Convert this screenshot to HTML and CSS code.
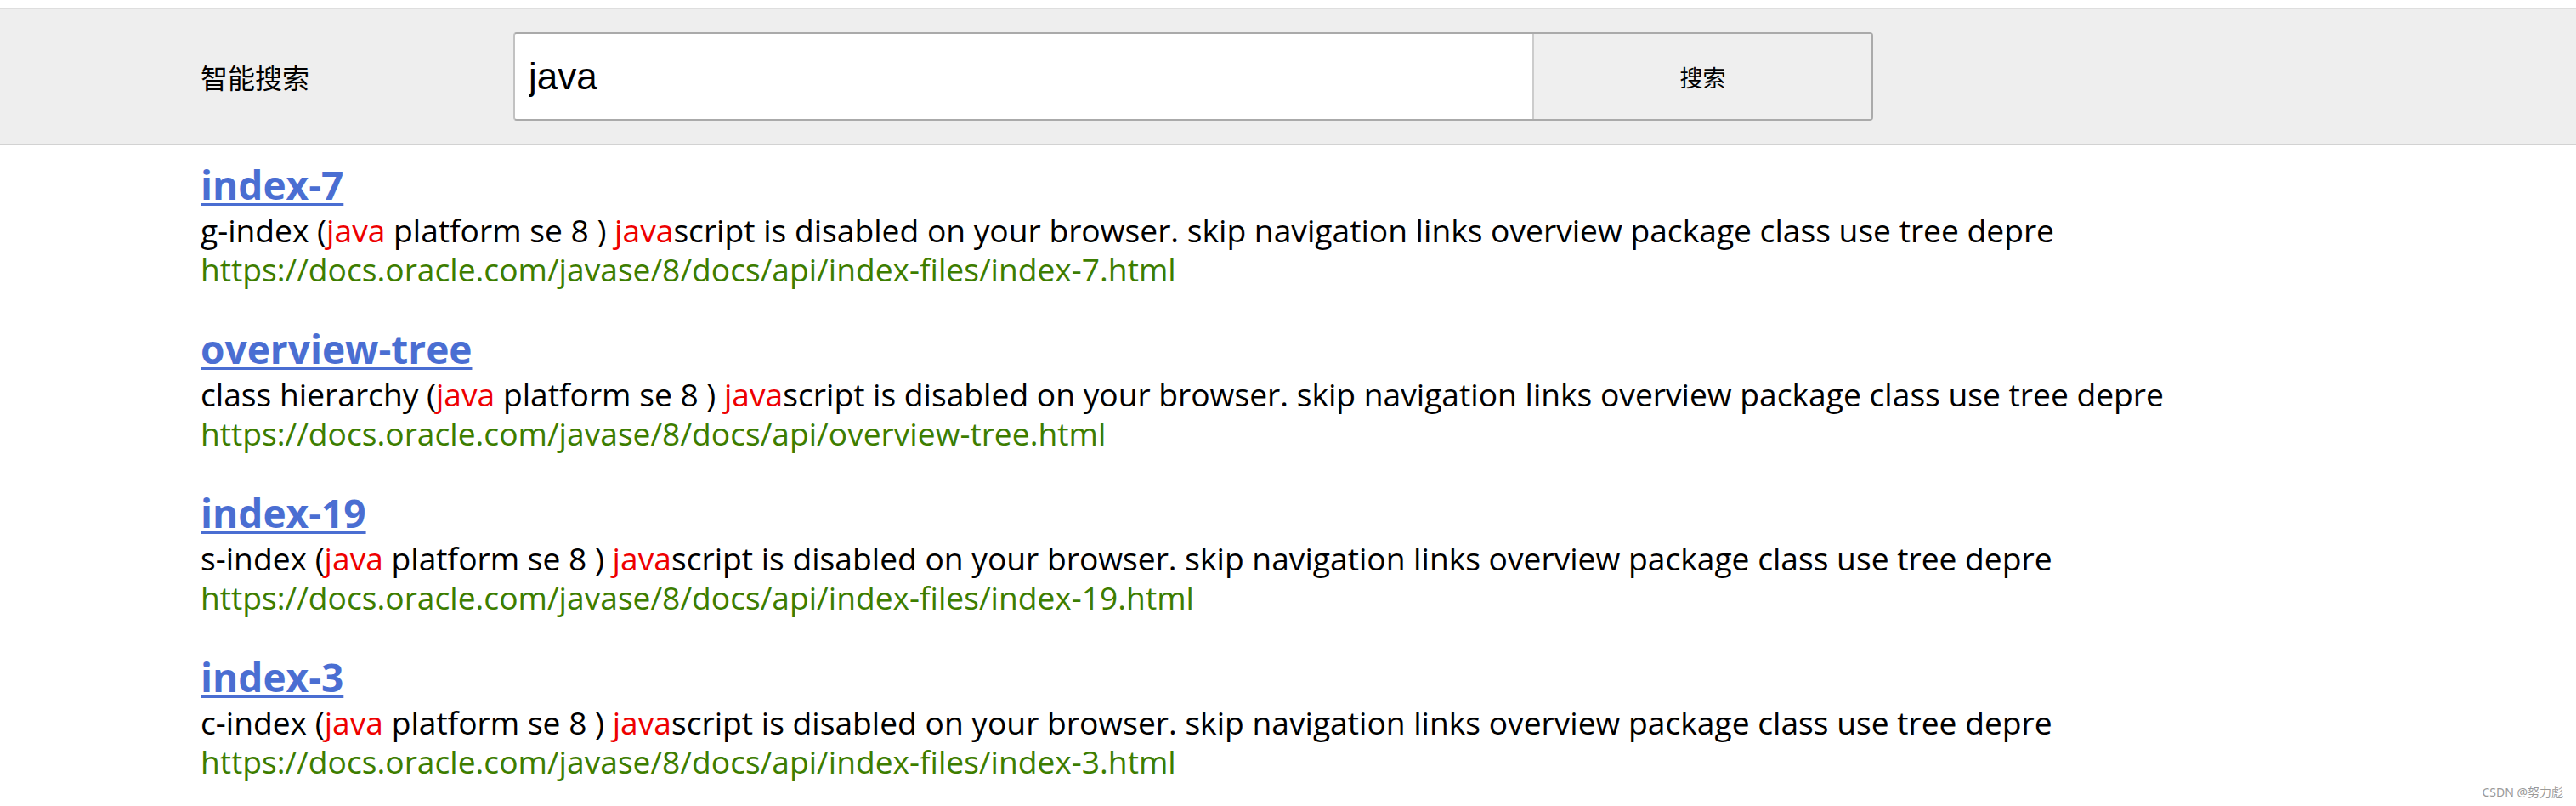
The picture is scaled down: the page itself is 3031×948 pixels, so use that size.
FILE: index.html
```html
<!DOCTYPE html>
<html lang="zh-CN">
<head>
<meta charset="utf-8">
<title>智能搜索</title>
<link rel="stylesheet" href="styles.css">
</head>
<body>
<header class="header">
  <div class="label">智能搜索</div>
  <form class="search">
    <input class="search-input" type="text" value="java">
    <button class="search-btn" type="button">搜索</button>
  </form>
</header>

<main class="results">
  <div class="item">
    <a class="title" href="#">index-7</a>
    <div class="desc">g-index (<span class="hl">java</span> platform se 8 ) <span class="hl">java</span>script is disabled on your browser. skip navigation links overview package class use tree depre</div>
    <div class="url">https://docs.oracle.com/javase/8/docs/api/index-files/index-7.html</div>
  </div>
  <div class="item">
    <a class="title" href="#">overview-tree</a>
    <div class="desc">class hierarchy (<span class="hl">java</span> platform se 8 ) <span class="hl">java</span>script is disabled on your browser. skip navigation links overview package class use tree depre</div>
    <div class="url">https://docs.oracle.com/javase/8/docs/api/overview-tree.html</div>
  </div>
  <div class="item">
    <a class="title" href="#">index-19</a>
    <div class="desc">s-index (<span class="hl">java</span> platform se 8 ) <span class="hl">java</span>script is disabled on your browser. skip navigation links overview package class use tree depre</div>
    <div class="url">https://docs.oracle.com/javase/8/docs/api/index-files/index-19.html</div>
  </div>
  <div class="item">
    <a class="title" href="#">index-3</a>
    <div class="desc">c-index (<span class="hl">java</span> platform se 8 ) <span class="hl">java</span>script is disabled on your browser. skip navigation links overview package class use tree depre</div>
    <div class="url">https://docs.oracle.com/javase/8/docs/api/index-files/index-3.html</div>
  </div>
</main>

<div class="watermark">CSDN @努力彪</div>
</body>
</html>
```

FILE: styles.css
```css
html, body {
  margin: 0;
  padding: 0;
  background: #ffffff;
}

body {
  position: relative;
  width: 3031px;
  height: 948px;
  overflow: hidden;
  font-family: "Open Sans", "Noto Sans", "Noto Sans CJK SC", sans-serif;
  color: #000;
}

.header {
  margin-top: 9px;
  height: 158px;
  background: #eeeeee;
  border-top: 2px solid #dedede;
  border-bottom: 2px solid #d2d2d2;
  display: flex;
  align-items: center;
  padding-left: 236px;
}

.label {
  flex: 0 0 368px;
  font-family: "Noto Sans CJK SC", sans-serif;
  font-size: 32px;
  line-height: 40px;
  color: #000;
}

.search {
  margin: 0;
  display: flex;
  width: 1600px;
  height: 104px;
  box-sizing: border-box;
  border: 2px solid #aaaaaa;
  border-left-color: #c2c2c2;
  border-radius: 4px;
  overflow: hidden;
}

.search-input {
  flex: 0 0 1199px;
  box-sizing: border-box;
  height: 100%;
  margin: 0;
  border: none;
  border-right: 2px solid #cccccc;
  background: #ffffff;
  padding: 0 0 0 16px;
  font-family: "Liberation Sans", Arial, sans-serif;
  font-size: 44px;
  color: #000;
  outline: none;
}

.search-btn {
  flex: 1 1 auto;
  margin: 0;
  border: none;
  background: #efefef;
  font-family: "Noto Sans CJK SC", sans-serif;
  font-size: 27px;
  color: #000;
  padding: 0;
}

.results {
  padding: 18px 0 0 236px;
}

.item {
  margin-bottom: 42px;
}

.title {
  display: inline-block;
  font-size: 46px;
  line-height: 56px;
  font-weight: 700;
  color: #4a6ed2;
  text-decoration: underline;
  text-decoration-thickness: 3px;
  text-underline-offset: 4px;
}

.desc {
  margin-top: 3px;
  font-size: 37.2px;
  line-height: 46px;
  color: #000;
  white-space: nowrap;
}

.hl {
  color: #ee0000;
}

.url {
  font-size: 37.2px;
  line-height: 46px;
  color: #3d7d00;
  white-space: nowrap;
}

.watermark {
  position: absolute;
  right: 15px;
  bottom: 7px;
  font-family: "Noto Sans", "Noto Sans CJK SC", sans-serif;
  font-size: 14px;
  color: #9a9a9a;
}
```
